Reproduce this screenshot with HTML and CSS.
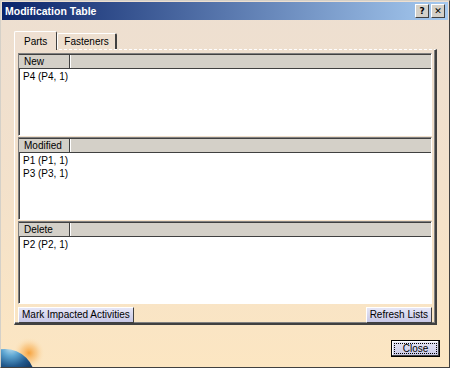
FILE: index.html
```html
<!DOCTYPE html>
<html lang="en">
<head>
    <meta charset="UTF-8">
    <title>Modification Table</title>
    <link rel="stylesheet" href="styles.css">
</head>
<body>

    <div class="window">
        <div class="titlebar">
            <span class="title">Modification Table</span>
            <div class="caption-buttons">
                <button class="caption-btn">?</button>
                <button class="caption-btn close-x">&#x2715;</button>
            </div>
        </div>

        <div class="content">
            <div class="tabs">
                <div class="tab active">Parts</div>
                <div class="tab">Fasteners</div>
            </div>

            <div class="tab-panel">
                <div class="list-box">
                    <div class="list-header"><span class="col">New</span></div>
                    <div class="list-body">
                        <div class="item">P4 (P4, 1)</div>
                    </div>
                </div>

                <div class="list-box">
                    <div class="list-header"><span class="col">Modified</span></div>
                    <div class="list-body">
                        <div class="item">P1 (P1, 1)</div>
                        <div class="item">P3 (P3, 1)</div>
                    </div>
                </div>

                <div class="list-box">
                    <div class="list-header"><span class="col">Delete</span></div>
                    <div class="list-body">
                        <div class="item">P2 (P2, 1)</div>
                    </div>
                </div>

                <div class="panel-actions">
                    <button class="btn">Mark Impacted Activities</button>
                    <button class="btn">Refresh Lists</button>
                </div>
            </div>

            <div class="footer">
                <button class="btn close">Close</button>
            </div>
        </div>

        <!-- globe decoration in the corner -->
        <svg class="globe" width="48" height="34" viewBox="0 0 48 34">
            <defs>
                <radialGradient id="glow" cx="28" cy="20" r="16" gradientUnits="userSpaceOnUse">
                    <stop offset="0" stop-color="#f6a23c"/>
                    <stop offset="0.5" stop-color="#f9c47e" stop-opacity="0.7"/>
                    <stop offset="1" stop-color="#fde6c0" stop-opacity="0"/>
                </radialGradient>
                <radialGradient id="earth" cx="10" cy="14" r="26" gradientUnits="userSpaceOnUse">
                    <stop offset="0" stop-color="#c4e4f2"/>
                    <stop offset="0.35" stop-color="#5ea6d2"/>
                    <stop offset="0.75" stop-color="#22598c"/>
                    <stop offset="1" stop-color="#17406c"/>
                </radialGradient>
            </defs>
            <circle cx="28" cy="20" r="16" fill="url(#glow)"/>
            <circle cx="4" cy="46" r="30" fill="url(#earth)"/>
        </svg>
    </div>

</body>
</html>
```

FILE: styles.css
```css
body {
    margin: 0;
    padding: 0;
    font-family: Tahoma, "Liberation Sans", sans-serif;
    font-size: 10px;
}

.window {
    position: relative;
    width: 450px;
    height: 368px;
    box-sizing: border-box;
    border-top: 1px solid #d4d0c8;
    border-left: 1px solid #d4d0c8;
    border-right: 1px solid #404040;
    border-bottom: 1px solid #404040;
    background: linear-gradient(to bottom, #eddfd1 0%, #f3e1cb 50%, #fce6c2 100%);
    overflow: hidden;
}

.titlebar {
    display: flex;
    justify-content: space-between;
    align-items: center;
    height: 18px;
    margin: 1px;
    padding: 0 3px 0 3px;
    background: linear-gradient(to right, #0a246a, #a6caf0);
    color: #fff;
}

.title {
    font-weight: bold;
    font-size: 10.5px;
}

.caption-buttons {
    display: flex;
    gap: 2px;
}

.caption-btn {
    width: 14px;
    height: 14px;
    padding: 0;
    font-family: "DejaVu Sans", sans-serif;
    font-size: 9px;
    font-weight: bold;
    line-height: 12px;
    color: #000;
    background-color: #d4d0c8;
    border: 1px solid;
    border-color: #fff #404040 #404040 #fff;
}

.content {
    padding: 9px 12px 0 13px;
}

.tabs {
    display: flex;
    align-items: flex-end;
    height: 19px;
}

.tab {
    height: 15px;
    padding: 0 6px;
    line-height: 15px;
    border-top: 1px solid #fff;
    border-left: 1px solid #fff;
    border-right: 2px solid #404040;
    border-radius: 2px 2px 0 0;
}

.tab.active {
    height: 18px;
    line-height: 19px;
    padding: 0 9px;
    margin-bottom: -1px;
    border-right: 1px solid #404040;
    position: relative;
    z-index: 1;
    background: #efe0d2;
}

.tab-panel {
    height: 276px;
    box-sizing: border-box;
    padding: 3px 3px 0 3px;
    border-top: 1px dashed #fff;
    border-left: 1px solid #fff;
    border-right: 2px solid #404040;
    border-bottom: 2px solid #404040;
    box-shadow: inset -1px -1px 0 #808080;
}

.list-box {
    display: flex;
    flex-direction: column;
    height: 83px;
    box-sizing: border-box;
    margin-bottom: 1px;
    border-top: 1px solid #808080;
    border-left: 1px solid #808080;
    border-right: 1px solid #fff;
    border-bottom: 1px solid #fff;
    box-shadow: inset 1px 1px 0 #404040;
}

.list-header {
    display: flex;
    height: 13px;
    flex-shrink: 0;
    margin-top: 1px;
    background-color: #d4d0c8;
    border-bottom: 1px solid #404040;
}

.col {
    width: 45px;
    padding-left: 4px;
    margin-left: 1px;
    line-height: 13px;
    border-right: 1px solid #404040;
    box-shadow: 1px 0 0 #fff;
}

.list-body {
    flex: 1;
    padding: 1px 3px;
    margin-left: 1px;
    background-color: #fff;
}

.item {
    line-height: 13px;
}

.panel-actions {
    display: flex;
    justify-content: space-between;
    padding-top: 2px;
}

.btn {
    height: 16px;
    padding: 0 3px;
    font-family: Tahoma, "Liberation Sans", sans-serif;
    font-size: 10px;
    line-height: 12px;
    color: #000;
    background: linear-gradient(to bottom, #e6e6f6, #c8c8e6);
    border: 1px solid;
    border-color: #fff #404040 #404040 #fff;
}

.footer {
    display: flex;
    justify-content: flex-end;
    padding-top: 15px;
}

.btn.close {
    width: 49px;
    height: 17px;
    margin-right: -3px;
    outline: 1px dotted #000;
    outline-offset: -4px;
    border: 1px solid #000;
    box-shadow: inset -1px -1px 0 #404040, inset 1px 1px 0 #fff;
}

.globe {
    position: absolute;
    left: 0;
    bottom: 0;
}
```
